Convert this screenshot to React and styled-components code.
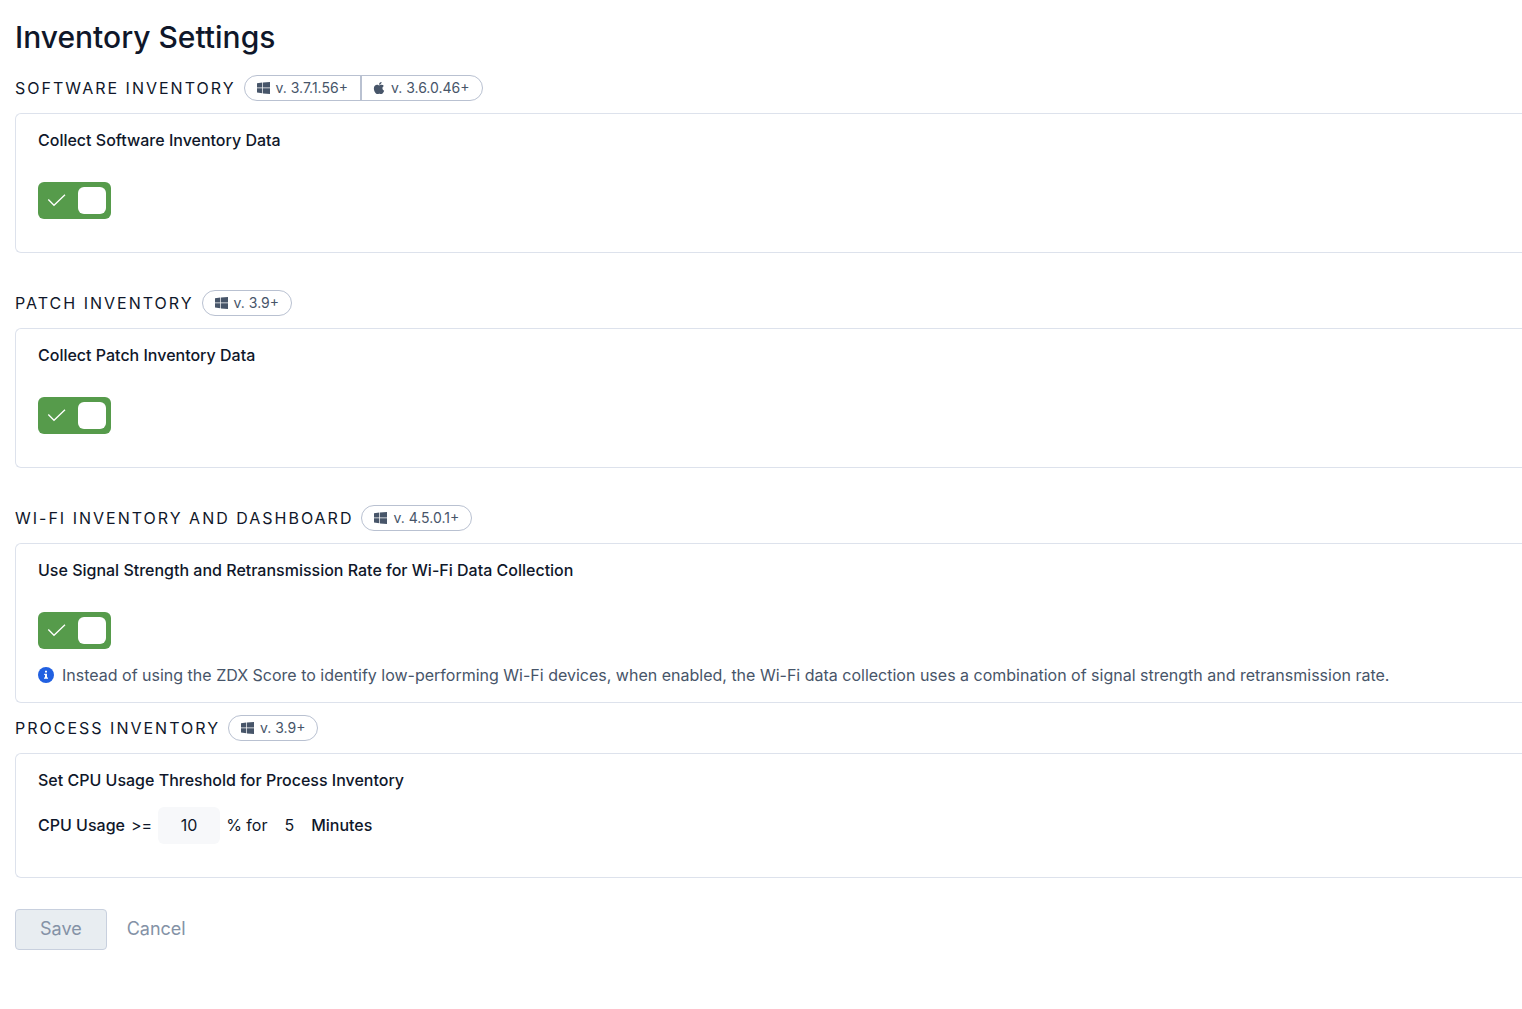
import React, { useState } from 'react'
import styled, { createGlobalStyle } from 'styled-components'

const theme = {
  colors: {
    text: '#0f172a',
    muted: '#475569',
    disabled: '#8492a6',
    border: '#dde2ec',
    pill: '#b9c1d1',
    green: '#569b4b',
    blue: '#2160e1',
    field: '#f7f8fa',
    button: '#e8edf1',
  },
  font: `Inter, 'Liberation Sans', sans-serif`,
}

const GlobalStyle = createGlobalStyle`
  *, *::before, *::after {
    box-sizing: border-box;
  }

  body {
    background: #fff;
    color: ${theme.colors.text};
    font-family: ${theme.font};
    font-size: 16px;
    line-height: 26px;
    margin: 0;
  }

  button, input {
    font: inherit;
  }
`

const Page = styled.main`
  padding: 17px 0 24px 15px;
`

const PageTitle = styled.h1`
  font-size: 30px;
  font-weight: 500;
  line-height: 40px;
  margin: 0 0 18px;
`

const Section = styled.section`
  margin-bottom: ${props => (props.$tight ? '12px' : '37px')};
`

const SectionHeader = styled.header`
  align-items: center;
  display: flex;
  gap: 8px;
  margin-bottom: 12px;
`

const SectionTitle = styled.h2`
  font-size: 16px;
  font-weight: 400;
  letter-spacing: 2px;
  margin: 0;
  text-transform: uppercase;
`

const Versions = styled.div`
  border: 1px solid ${theme.colors.pill};
  border-radius: 13px;
  display: flex;
  height: 26px;
`

const Version = styled.span`
  align-items: center;
  color: ${theme.colors.muted};
  display: flex;
  font-size: 14px;
  gap: 6px;
  line-height: 24px;
  padding: 0 12px;

  & + & {
    border-left: 2px solid ${theme.colors.pill};
    padding-left: 11px;
  }
`

const Card = styled.div`
  border: 1px solid ${theme.colors.border};
  border-radius: 6px 0 0 6px;
  border-right: 0;
  padding: 13px 22px ${props => (props.$note ? '14px' : '33px')};
`

const CardTitle = styled.h3`
  font-size: 16px;
  font-weight: 500;
  margin: 0 0 ${props => (props.$compact ? '14px' : '29px')};
`

const Toggle = styled.label`
  align-items: center;
  background: ${props => (props.$on ? theme.colors.green : theme.colors.disabled)};
  border-radius: 6px;
  cursor: pointer;
  display: flex;
  flex-direction: ${props => (props.$on ? 'row' : 'row-reverse')};
  height: 37px;
  justify-content: space-between;
  padding: 0 5px 0 9px;
  position: relative;
  width: 73px;
`

const ToggleInput = styled.input`
  cursor: pointer;
  height: 100%;
  inset: 0;
  margin: 0;
  opacity: 0;
  position: absolute;
  width: 100%;
`

const Knob = styled.span`
  background: #fff;
  border-radius: 6px;
  height: 27px;
  width: 28px;
`

const Note = styled.p`
  align-items: center;
  color: ${theme.colors.muted};
  display: flex;
  gap: 8px;
  margin: 13px 0 0;
`

const Threshold = styled.div`
  align-items: baseline;
  display: flex;
  gap: 6px;
`

const Strong = styled.span`
  font-weight: 500;
`

const UsageInput = styled.input`
  background: ${theme.colors.field};
  border: 0;
  border-radius: 6px;
  color: inherit;
  height: 37px;
  padding: 0 0 2px;
  text-align: center;
  width: 62px;
`

const Duration = styled.span`
  padding: 0 11px;
`

const Actions = styled.div`
  display: flex;
  gap: 20px;
  margin-top: 31px;
`

const Button = styled.button`
  background: ${props => (props.$plain ? 'none' : theme.colors.button)};
  border: ${props => (props.$plain ? '0' : '1px solid #c8d0de')};
  border-radius: 4px;
  color: ${theme.colors.disabled};
  font-size: 18px;
  height: 41px;
  padding: ${props => (props.$plain ? '0 0 2px' : '0 24px 2px')};
`

const Icon = styled.svg`
  display: block;
  flex: none;
`

const WindowsIcon = () => (
  <Icon width="13" height="12" viewBox="0 0 13 12" fill="currentColor" aria-hidden="true">
    <path d="M0 1.3 5.3.6v5H0zM6 .5 13 0v5.6H6zM0 6.3h5.3v5L0 10.6zM6 6.3h7V12l-7-.6z" />
  </Icon>
)

const AppleIcon = () => (
  <Icon width="12" height="14" viewBox="0 0 384 512" fill="currentColor" aria-hidden="true">
    <path d="M318.7 268.7c-.2-36.7 16.4-64.4 50-84.8-18.8-26.9-47.2-41.7-84.7-44.6-35.5-2.8-74.3 20.7-88.5 20.7-15 0-49.4-19.7-76.4-19.7C63.3 141.2 4 184.8 4 273.5q0 39.3 14.4 81.2c12.8 36.7 59 126.7 107.2 125.2 25.2-.6 43-17.9 75.8-17.9 31.8 0 48.3 17.9 76.4 17.9 48.6-.7 90.4-82.5 102.6-119.3-65.2-30.7-61.7-90-61.7-91.9zm-56.6-164.2c27.3-32.4 24.8-61.9 24-72.5-24.1 1.4-52 16.4-67.9 34.9-17.5 19.8-27.8 44.3-25.6 71.9 26.1 2 49.9-11.4 69.5-34.3z" />
  </Icon>
)

const CheckIcon = () => (
  <Icon width="20" height="16" viewBox="0 0 20 16" fill="none" stroke="#fff" strokeWidth="1.3" aria-hidden="true">
    <path d="m1.3 6.5 5.7 5.8L18 1.7" />
  </Icon>
)

const InfoIcon = () => (
  <Icon width="16" height="16" viewBox="0 0 16 16" aria-hidden="true">
    <circle cx="8" cy="8" r="8" fill={theme.colors.blue} />
    <path d="M7 3.8h2v1.6H7zM6.2 6.7H9v3.8h1v1.3H6v-1.3h1V8h-.8z" fill="#fff" />
  </Icon>
)

const icons = { windows: WindowsIcon, apple: AppleIcon }

function Heading({ title, versions }) {
  return (
    <SectionHeader>
      <SectionTitle>{title}</SectionTitle>
      <Versions>
        {versions.map(([os, version]) => {
          const OsIcon = icons[os]
          return (
            <Version key={os}>
              <OsIcon />
              v. {version}
            </Version>
          )
        })}
      </Versions>
    </SectionHeader>
  )
}

function Switch({ id }) {
  const [on, setOn] = useState(true)
  return (
    <Toggle $on={on}>
      <ToggleInput
        type="checkbox"
        role="switch"
        aria-labelledby={id}
        checked={on}
        onChange={e => setOn(e.target.checked)}
      />
      <CheckIcon />
      <Knob />
    </Toggle>
  )
}

const settings = [
  {
    id: 'software',
    title: 'Software Inventory',
    versions: [['windows', '3.7.1.56+'], ['apple', '3.6.0.46+']],
    label: 'Collect Software Inventory Data',
  },
  {
    id: 'patch',
    title: 'Patch Inventory',
    versions: [['windows', '3.9+']],
    label: 'Collect Patch Inventory Data',
  },
  {
    id: 'wifi',
    title: 'Wi-Fi Inventory and Dashboard',
    versions: [['windows', '4.5.0.1+']],
    label: 'Use Signal Strength and Retransmission Rate for Wi-Fi Data Collection',
    note:
      'Instead of using the ZDX Score to identify low-performing Wi-Fi devices, when enabled, the Wi-Fi data collection uses a combination of signal strength and retransmission rate.',
  },
]

export default function App() {
  const [usage, setUsage] = useState('10')

  return (
    <>
      <GlobalStyle />
      <Page>
        <PageTitle>Inventory Settings</PageTitle>
        {settings.map(item => (
          <Section key={item.id} $tight={Boolean(item.note)}>
            <Heading title={item.title} versions={item.versions} />
            <Card $note={Boolean(item.note)}>
              <CardTitle id={item.id}>{item.label}</CardTitle>
              <Switch id={item.id} />
              {item.note && (
                <Note>
                  <InfoIcon />
                  {item.note}
                </Note>
              )}
            </Card>
          </Section>
        ))}
        <Section $tight>
          <Heading title="Process Inventory" versions={[['windows', '3.9+']]} />
          <Card>
            <CardTitle $compact>Set CPU Usage Threshold for Process Inventory</CardTitle>
            <Threshold>
              <Strong as="label" htmlFor="usage">CPU Usage</Strong>
              <span>&gt;=</span>
              <UsageInput id="usage" value={usage} onChange={e => setUsage(e.target.value)} />
              <span>% for</span>
              <Duration>5</Duration>
              <Strong>Minutes</Strong>
            </Threshold>
          </Card>
        </Section>
        <Actions>
          <Button type="button" disabled>Save</Button>
          <Button type="button" $plain>Cancel</Button>
        </Actions>
      </Page>
    </>
  )
}
